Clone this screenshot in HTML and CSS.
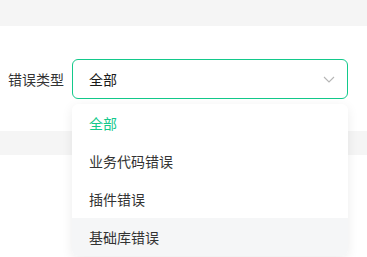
FILE: index.html
```html
<!DOCTYPE html>
<html lang="zh-CN">
<head>
    <meta charset="UTF-8">
    <meta name="viewport" content="width=device-width, initial-scale=1.0">
    <title>错误筛选</title>
    <link rel="stylesheet" href="styles.css">
</head>
<body>
    <div class="top_bar"></div>

    <div class="filter_area">
        <div class="form_row">
            <label class="form_label">错误类型</label>
            <div class="select_wrap">
                <div class="select_box">
                    <span class="select_value">全部</span>
                    <svg class="arrow" width="12" height="7" viewBox="0 0 12 7">
                        <path d="M1 1 L6 6 L11 1" fill="none" stroke="#b5b5b5" stroke-width="1.1"/>
                    </svg>
                </div>
                <ul class="dropdown">
                    <li class="option active">全部</li>
                    <li class="option">业务代码错误</li>
                    <li class="option">插件错误</li>
                    <li class="option hover">基础库错误</li>
                </ul>
            </div>
        </div>
    </div>

    <div class="gap_bar"></div>
</body>
</html>
```

FILE: styles.css
```css
html {
    overflow: hidden;
}

body {
    margin: 0;
    padding: 0;
    min-height: 257px;
    background: #fff;
    font-family: "Noto Sans CJK SC", "Noto Sans", sans-serif;
}

.top_bar {
    height: 26px;
    background: #f5f5f5;
}

.filter_area {
    padding: 33px 0 0 8px;
    height: 72px;
}

.form_row {
    display: flex;
    align-items: center;
}

.form_label {
    font-size: 14px;
    color: #333;
    width: 64px;
}

.select_wrap {
    position: relative;
    width: 276px;
}

.select_box {
    height: 38px;
    border: 1px solid #13c98b;
    border-radius: 6px;
    display: flex;
    align-items: center;
    justify-content: space-between;
    padding: 0 12px 0 16px;
}

.select_value {
    font-size: 14px;
    color: #1a1a1a;
}

.arrow {
    margin-top: 1px;
}

.dropdown {
    position: absolute;
    top: 45px;
    left: 0;
    width: 276px;
    margin: 0;
    padding: 0;
    list-style: none;
    background: #fff;
    border-radius: 6px;
    box-shadow: 0 3px 12px rgba(0, 0, 0, 0.08);
    overflow: hidden;
    z-index: 10;
}

.option {
    height: 38px;
    line-height: 38px;
    padding-left: 17px;
    font-size: 14px;
    color: #333;
}

.option.active {
    color: #13c98b;
}

.option.hover {
    background: #f5f6f7;
}

.gap_bar {
    height: 24px;
    background: #f5f5f5;
}
```
